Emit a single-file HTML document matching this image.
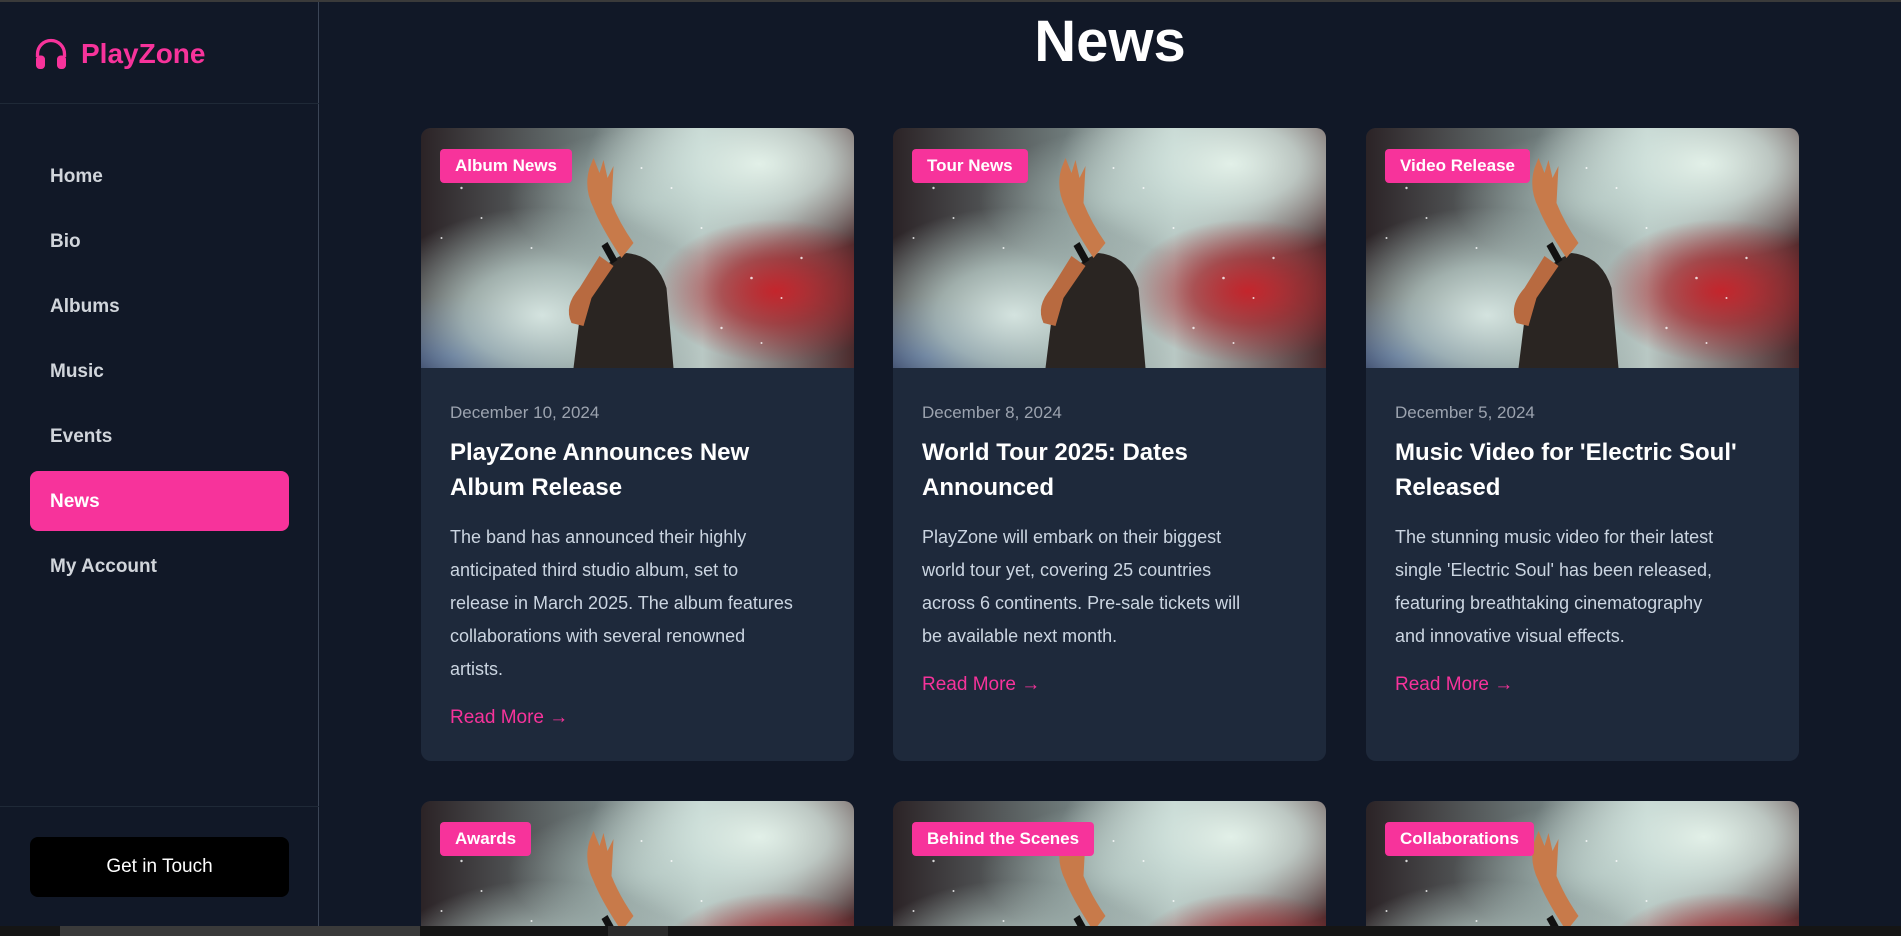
<!DOCTYPE html>
<html style="width:1901px;height:936px;overflow:hidden"><head><meta charset="utf-8">
<style>
*{margin:0;padding:0;box-sizing:border-box}
body{width:1901px;height:936px;overflow:hidden;background:#111827;font-family:"Liberation Sans",sans-serif;position:relative}
.topbar{position:absolute;left:0;top:0;width:1901px;height:2px;background:#3a3a3a}
.side{position:absolute;left:0;top:2px;width:319px;height:924px;background:#111827;border-right:1px solid #3b4556}
.logo{position:absolute;left:33px;top:34px;display:flex;align-items:center;color:#f7339b;font-weight:bold;font-size:28px}
.logo svg{margin-right:12px}
.hr{position:absolute;left:0;width:319px;height:1px;background:#1f2937}
.nav{position:absolute;left:50px;color:#d1d5db;font-weight:bold;font-size:19px}
.active{position:absolute;left:30px;top:469px;width:259px;height:60px;background:#f7339b;border-radius:8px}
.btn{position:absolute;left:30px;width:259px;height:60px;background:#000;border-radius:8px;color:#fff;font-size:19px;display:flex;align-items:center;justify-content:center}
h1{position:absolute;left:319px;width:1582px;top:8px;text-align:center;color:#fff;font-size:58px;font-weight:bold}
.card{position:absolute;width:433px;background:#1e293b;border-radius:10px;overflow:hidden}
.img{position:relative;height:240px;overflow:hidden;background:
radial-gradient(ellipse 28% 30% at 82% 68%,#c4252c 0%,rgba(170,40,45,.7) 45%,transparent 100%),
radial-gradient(ellipse 40% 40% at 78% 15%,#e2f0e8 0%,rgba(210,228,222,.8) 40%,transparent 100%),
radial-gradient(ellipse 40% 45% at 28% 78%,#d4e3df 0%,rgba(190,210,205,.75) 45%,transparent 100%),
radial-gradient(ellipse 35% 30% at 55% 30%,#a9bcb8 0%,transparent 100%),
radial-gradient(ellipse 30% 25% at 8% 95%,#28407a 0%,transparent 100%),
linear-gradient(90deg,#2b2326 0%,#6e7a7a 40%,#b9c8c4 65%,#4a2a2c 100%)}
.img svg{position:absolute;left:0;top:0}
.tag{position:absolute;left:19px;top:21px;height:34px;padding:0 15px;background:#f7339b;color:#fff;font-weight:bold;font-size:17px;border-radius:4px;line-height:34px}
.body{padding:35px 29px 0}
.date{color:#9ca3af;font-size:17px;line-height:20px}
.title{color:#fff;font-weight:bold;font-size:24px;line-height:35px;margin-top:12px}
.txt{color:#cbd5e1;font-size:18px;line-height:33px;margin-top:16px}
.more{color:#f7339b;font-size:19px;margin-top:20px;line-height:24px}
.bottom{position:absolute;left:0;top:926px;width:1901px;height:10px;background:#151515}
.short{height:125px;border-radius:10px 10px 0 0}
</style></head><body>
<div class="topbar"></div>
<div class="side">
 <div class="logo"><svg width="36" height="36" viewBox="0 0 24 24"><path d="M3 14v-2a9 9 0 0 1 18 0v2" fill="none" stroke="#f7339b" stroke-width="2.2"/><rect x="2" y="13" width="6" height="9" rx="2.5" fill="#f7339b"/><rect x="16" y="13" width="6" height="9" rx="2.5" fill="#f7339b"/></svg>PlayZone</div>
 <div class="hr" style="top:101px"></div>
 <div class="nav" style="top:164px">Home</div>
 <div class="nav" style="top:229px">Bio</div>
 <div class="nav" style="top:294px">Albums</div>
 <div class="nav" style="top:359px">Music</div>
 <div class="nav" style="top:424px">Events</div>
 <div class="active"></div>
 <div class="nav" style="top:489px;color:#fff">News</div>
 <div class="nav" style="top:554px">My Account</div>
 <div class="hr" style="top:804px"></div>
 <div class="btn" style="top:835px">Get in Touch</div>
</div>
<h1>News</h1>

<svg width="0" height="0" style="position:absolute;left:0;top:0"><defs><symbol id="fig" viewBox="0 0 432 240"><g fill="#2a2522"><path d="M152 240 L160 175 Q170 140 205 125 Q235 128 245 160 L252 240 Z"/><path d="M168 40 L172 30 L178 45 L182 32 L186 50 L192 38 L190 75 Q198 95 212 115 L200 130 Q180 100 172 80 Q162 60 168 40Z" fill="#c87a4a"/><path d="M150 195 Q142 178 158 160 L178 128 L192 138 L170 170 L162 198 Z" fill="#b86a40"/><path d="M180 118 L186 114 L196 132 L190 136 Z" fill="#111"/></g><g fill="#fff" opacity=".8"><circle cx="40" cy="60" r="1.2"/><circle cx="60" cy="90" r="1"/><circle cx="330" cy="150" r="1.3"/><circle cx="360" cy="170" r="1"/><circle cx="300" cy="200" r="1.2"/><circle cx="250" cy="60" r="1"/><circle cx="110" cy="120" r="1"/><circle cx="380" cy="130" r="1.2"/><circle cx="20" cy="110" r="1"/><circle cx="340" cy="215" r="1"/><circle cx="220" cy="40" r="1"/><circle cx="280" cy="100" r="1"/></g></symbol></defs></svg>

<div class="card" style="left:421px;top:128px;height:633px"><div class="img"><svg width="433" height="240" preserveAspectRatio="none"><use href="#fig"/></svg><div class="tag">Album News</div></div>
<div class="body"><div class="date">December 10, 2024</div><div class="title">PlayZone Announces New<br>Album Release</div><div class="txt">The band has announced their highly<br>anticipated third studio album, set to<br>release in March 2025. The album features<br>collaborations with several renowned<br>artists.</div><div class="more">Read More →</div></div></div>

<div class="card" style="left:893px;top:128px;height:633px"><div class="img"><svg width="433" height="240" preserveAspectRatio="none"><use href="#fig"/></svg><div class="tag">Tour News</div></div>
<div class="body"><div class="date">December 8, 2024</div><div class="title">World Tour 2025: Dates<br>Announced</div><div class="txt">PlayZone will embark on their biggest<br>world tour yet, covering 25 countries<br>across 6 continents. Pre-sale tickets will<br>be available next month.</div><div class="more">Read More →</div></div></div>

<div class="card" style="left:1366px;top:128px;height:633px"><div class="img"><svg width="433" height="240" preserveAspectRatio="none"><use href="#fig"/></svg><div class="tag">Video Release</div></div>
<div class="body"><div class="date">December 5, 2024</div><div class="title">Music Video for 'Electric Soul'<br>Released</div><div class="txt">The stunning music video for their latest<br>single 'Electric Soul' has been released,<br>featuring breathtaking cinematography<br>and innovative visual effects.</div><div class="more">Read More →</div></div></div>

<div class="card short" style="left:421px;top:801px"><div class="img"><svg width="433" height="240" preserveAspectRatio="none"><use href="#fig"/></svg><div class="tag">Awards</div></div></div>
<div class="card short" style="left:893px;top:801px"><div class="img"><svg width="433" height="240" preserveAspectRatio="none"><use href="#fig"/></svg><div class="tag">Behind the Scenes</div></div></div>
<div class="card short" style="left:1366px;top:801px"><div class="img"><svg width="433" height="240" preserveAspectRatio="none"><use href="#fig"/></svg><div class="tag">Collaborations</div></div></div>

<div class="bottom"><div style="position:absolute;left:60px;top:0;width:360px;height:10px;background:#3a3a3a"></div><div style="position:absolute;left:608px;top:0;width:60px;height:10px;background:#2a2a2a"></div></div>
</body></html>
